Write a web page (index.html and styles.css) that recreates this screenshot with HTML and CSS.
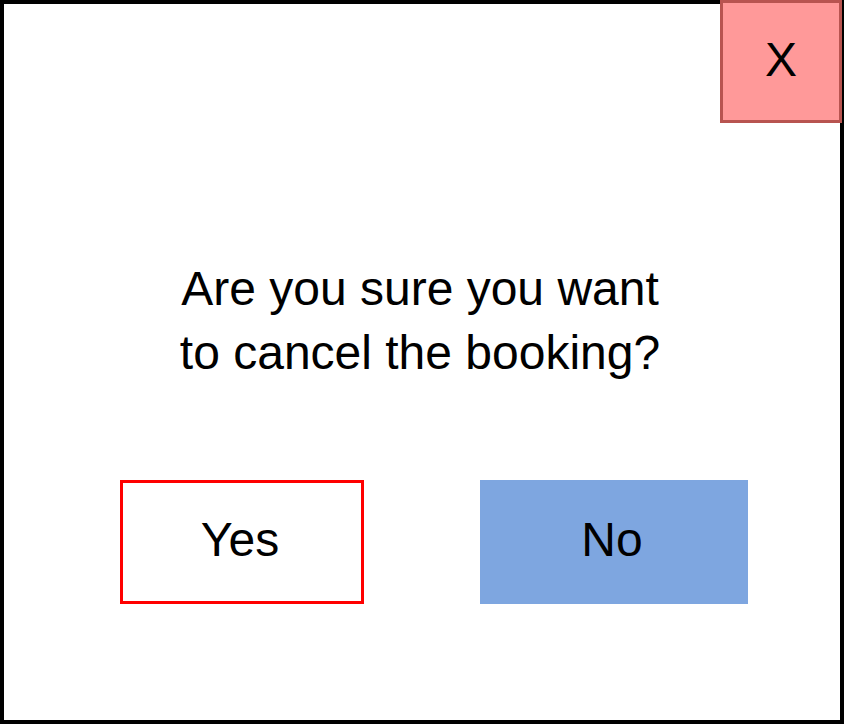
FILE: index.html
```html
<!DOCTYPE html>
<html lang="en">
<head>
    <meta charset="UTF-8">
    <meta name="viewport" content="width=device-width, initial-scale=1.0">
    <title>Cancel booking</title>
    <link rel="stylesheet" href="styles.css">
</head>
<body>
    <div class="dialog">
        <button class="close-btn">X</button>

        <p class="message">Are you sure you want<br>to cancel the booking?</p>

        <div class="actions">
            <button class="yes-btn">Yes</button>
            <button class="no-btn">No</button>
        </div>
    </div>
</body>
</html>
```

FILE: styles.css
```css
body {
    margin: 0;
    font-family: "Liberation Sans", Arial, sans-serif;
    background-color: #fff;
}
.dialog {
    position: relative;
    box-sizing: border-box;
    width: 844px;
    height: 724px;
    border: 4px solid #000;
    display: flex;
    flex-direction: column;
}
button {
    font-family: inherit;
    color: #000;
    cursor: pointer;
    padding: 0;
    display: flex;
    align-items: center;
    justify-content: center;
}
.close-btn {
    position: absolute;
    top: -4px;
    right: -2px;
    box-sizing: border-box;
    width: 122px;
    height: 123px;
    padding-bottom: 4px;
    background-color: #ff9999;
    border: 3px solid #b85450;
    font-size: 48px;
}
.message {
    margin: 253px 0 0;
    padding-right: 4px;
    text-align: center;
    font-size: 48px;
    line-height: 64px;
}
.actions {
    display: flex;
    gap: 116px;
    margin-top: 95px;
    padding-left: 116px;
}
.actions button {
    box-sizing: border-box;
    height: 124px;
    padding: 0 4px 6px 0;
    font-size: 48px;
}
.yes-btn {
    width: 244px;
    background-color: #fff;
    border: 3px solid #ff0000;
}
.no-btn {
    width: 268px;
    background-color: #7ea6e0;
    border: none;
}
```
